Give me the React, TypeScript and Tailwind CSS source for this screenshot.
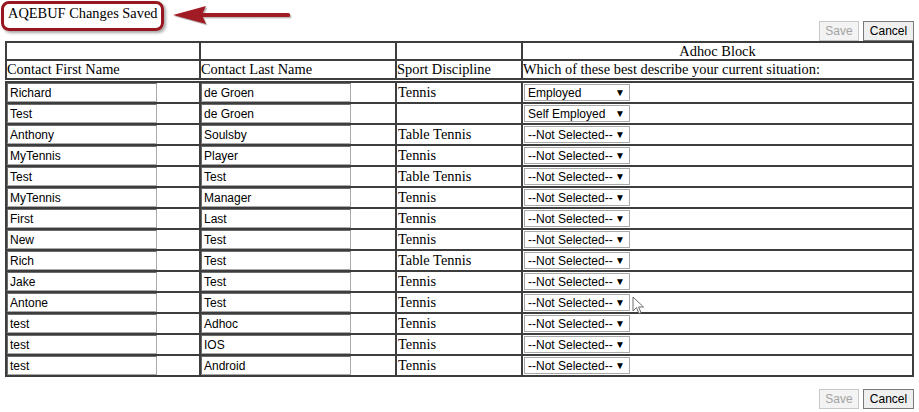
import React from "react";

type Row = { first: string; last: string; sport: string; status: string };

const rows: Row[] = [
  { first: "Richard", last: "de Groen", sport: "Tennis", status: "Employed" },
  { first: "Test", last: "de Groen", sport: "", status: "Self Employed" },
  { first: "Anthony", last: "Soulsby", sport: "Table Tennis", status: "--Not Selected--" },
  { first: "MyTennis", last: "Player", sport: "Tennis", status: "--Not Selected--" },
  { first: "Test", last: "Test", sport: "Table Tennis", status: "--Not Selected--" },
  { first: "MyTennis", last: "Manager", sport: "Tennis", status: "--Not Selected--" },
  { first: "First", last: "Last", sport: "Tennis", status: "--Not Selected--" },
  { first: "New", last: "Test", sport: "Tennis", status: "--Not Selected--" },
  { first: "Rich", last: "Test", sport: "Table Tennis", status: "--Not Selected--" },
  { first: "Jake", last: "Test", sport: "Tennis", status: "--Not Selected--" },
  { first: "Antone", last: "Test", sport: "Tennis", status: "--Not Selected--" },
  { first: "test", last: "Adhoc", sport: "Tennis", status: "--Not Selected--" },
  { first: "test", last: "IOS", sport: "Tennis", status: "--Not Selected--" },
  { first: "test", last: "Android", sport: "Tennis", status: "--Not Selected--" },
];

const grid = "grid grid-cols-[194px_196px_126px_391px]";
const cell = "border-r-2 border-b-2 border-[#3d3d3d]";

function Buttons() {
  return (
    <div className="flex justify-end gap-[4px] pr-[5px] font-['Liberation_Sans',Arial,sans-serif] text-[12px]">
      <button
        type="button"
        disabled
        className="h-[20px] w-[40px] border border-[#c8c8c8] bg-[#f3f3f3] text-[#a3a3a3] leading-none"
      >
        Save
      </button>
      <button
        type="button"
        className="h-[20px] w-[51px] border border-[#7a7a7a] bg-[#efefef] text-black leading-none"
      >
        Cancel
      </button>
    </div>
  );
}

function FakeInput({ value }: { value: string }) {
  return (
    <div className="flex h-[19px] w-[150px] items-center border border-[#a9a9a9] border-l-[#6b6b6b] border-t-[#6b6b6b] pl-[2px] font-['Liberation_Sans',Arial,sans-serif] text-[12px] text-black">
      {value}
    </div>
  );
}

function FakeSelect({ value }: { value: string }) {
  return (
    <div className="ml-[1px] mt-[1px] flex h-[17px] w-[106px] items-center justify-between border border-[#a9a9a9] bg-white pl-[3px] pr-[4px] font-['Liberation_Sans',Arial,sans-serif] text-[12px] text-black">
      <span className="whitespace-nowrap leading-none">{value}</span>
      <span className="text-[10px] leading-none">▼</span>
    </div>
  );
}

export default function App() {
  return (
    <div className="relative h-[412px] w-[919px] overflow-hidden bg-white font-['Liberation_Serif','Times_New_Roman',serif] text-[14.4px] text-black">
      {/* callout annotation */}
      <div className="pointer-events-none absolute left-[1px] top-[1px] h-[30px] w-[163px] rounded-[8px] border-[3px] border-[#98161f] shadow-[2px_2px_3px_rgba(0,0,0,0.35)]" />
      <svg className="pointer-events-none absolute left-[168px] top-[3px]" width="130" height="26" viewBox="0 0 130 26">
        <g transform="translate(1.5,1.5)" fill="#000" opacity="0.25">
          <rect x="32" y="10" width="90" height="4" rx="1.5" />
          <polygon points="5,12 38,3 34,12 38,21" />
        </g>
        <rect x="32" y="10" width="90" height="4" rx="1.5" fill="#a01b24" />
        <polygon points="5,12 38,3 34,12 38,21" fill="#a01b24" />
      </svg>

      <div className="h-[21px] pl-[8px] pt-[5px] leading-[16px]">AQEBUF Changes Saved</div>
      <Buttons />

      {/* header block */}
      <div className={`${grid} ml-[5px] w-[909px] border-l-2 border-t-2 border-[#3d3d3d] leading-[17px]`}>
        <div className={`${cell} h-[18px]`} />
        <div className={`${cell} h-[18px]`} />
        <div className={`${cell} h-[18px]`} />
        <div className={`${cell} h-[18px] text-center`}>Adhoc Block</div>
        <div className={`${cell} h-[19px] whitespace-nowrap`}>Contact First Name</div>
        <div className={`${cell} h-[19px] whitespace-nowrap`}>Contact Last Name</div>
        <div className={`${cell} h-[19px] whitespace-nowrap`}>Sport Discipline</div>
        <div className={`${cell} h-[19px] whitespace-nowrap`}>Which of these best describe your current situation:</div>
      </div>

      {/* data block */}
      <div className={`${grid} ml-[5px] mt-[1px] w-[909px] border-l-2 border-t-2 border-[#3d3d3d]`}>
        {rows.map((r, i) => (
          <React.Fragment key={i}>
            <div className={`${cell} h-[21px]`}>
              <FakeInput value={r.first} />
            </div>
            <div className={`${cell} h-[21px]`}>
              <FakeInput value={r.last} />
            </div>
            <div className={`${cell} h-[21px] pl-px leading-[19px]`}>{r.sport}</div>
            <div className={`${cell} h-[21px]`}>
              <FakeSelect value={r.status} />
            </div>
          </React.Fragment>
        ))}
      </div>

      <div className="mt-[12px]">
        <Buttons />
      </div>

      {/* mouse cursor */}
      <svg className="pointer-events-none absolute left-[632px] top-[296px]" width="13" height="19" viewBox="0 0 13 19">
        <path d="M1 1 L1 15 L4.5 11.5 L7 17.5 L9 16.6 L6.6 11 L11.5 11 Z" fill="#fff" stroke="#6b6b6b" strokeWidth="1" strokeLinejoin="round" />
      </svg>
    </div>
  );
}
